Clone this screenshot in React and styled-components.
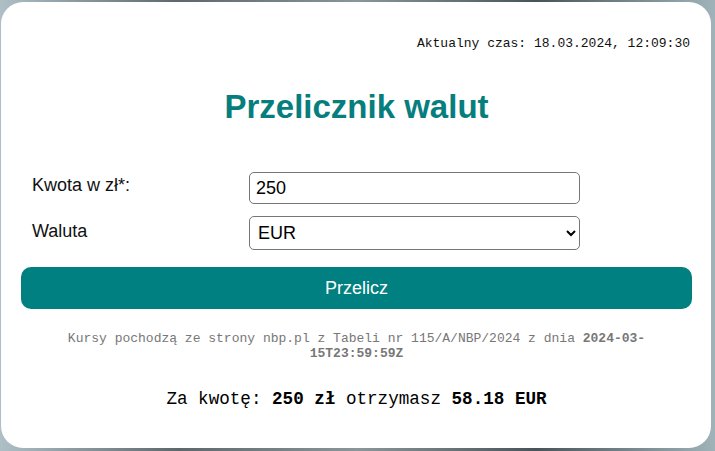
import React, { useState } from "react";
import styled, { createGlobalStyle } from "styled-components";

const GlobalStyle = createGlobalStyle`
    html, body {
        margin: 0;
        padding: 0;
        height: 451px;
        overflow: hidden;
    }
    body {
        background: linear-gradient(90deg, #aebfc6 0%, #5d676c 25%, #8a969a 50%, #49545a 75%, #9fb3b8 100%);
        font-family: "Liberation Sans", Arial, sans-serif;
    }
`

const Card = styled.div`
    box-sizing: border-box;
    margin: 2px 4px 0 1px;
    height: 446px;
    padding: 0 19px 0 20px;
    background: #fff;
    border-radius: 22px;
    display: flex;
    flex-direction: column;
`

const Clock = styled.div`
    margin-top: 34px;
    padding-right: 2px;
    text-align: right;
    font-family: "Liberation Mono", "Courier New", monospace;
    font-size: 13px;
    line-height: 15px;
    color: #111;
`

const Title = styled.h1`
    margin: 37px 0 0;
    text-align: center;
    font-size: 33px;
    line-height: 38px;
    font-weight: 700;
    color: #077e7e;
`

const Form = styled.form`
    margin-top: 46px;
    display: grid;
    grid-template-columns: 217px 331px;
    row-gap: 12px;
    padding-left: 11px;
    align-items: center;
`

const Label = styled.label`
    font-size: 18px;
    color: #111;
    padding-bottom: ${props => props.$lift || 0}px;
`

const Input = styled.input`
    box-sizing: border-box;
    height: 32px;
    width: 100%;
    padding: 0 6px;
    border: 1px solid #767676;
    border-radius: 5px;
    font-family: "Liberation Sans", Arial, sans-serif;
    font-size: 18px;
    color: #000;
    outline: none;
`

const Select = styled.select`
    box-sizing: border-box;
    height: 34px;
    width: 100%;
    padding: 0 4px;
    border: 1px solid #767676;
    border-radius: 5px;
    background: #fff;
    font-family: "Liberation Sans", Arial, sans-serif;
    font-size: 18px;
    color: #000;
`

const Button = styled.button`
    margin-top: 17px;
    height: 42px;
    width: 100%;
    border: none;
    border-radius: 10px;
    background: #008080;
    color: #fff;
    font-family: "Liberation Sans", Arial, sans-serif;
    font-size: 18px;
    cursor: pointer;
`

const Source = styled.p`
    margin: 22px 0 0;
    padding: 0 14px;
    text-align: center;
    font-family: "Liberation Mono", "Courier New", monospace;
    font-size: 13px;
    line-height: 15px;
    color: #777;
`

const Result = styled.p`
    margin: 28px 0 0;
    text-align: center;
    font-family: "Liberation Mono", "Courier New", monospace;
    font-size: 17.6px;
    line-height: 20px;
    color: #000;
`

const App = () => {
    const [amount, setAmount] = useState("250");
    const [currency, setCurrency] = useState("EUR");

    return (<>
        <GlobalStyle />
        <Card>
            <Clock>Aktualny czas: 18.03.2024, 12:09:30</Clock>
            <Title>Przelicznik walut</Title>
            <Form onSubmit={e => e.preventDefault()}>
                <Label htmlFor="amount" $lift={6}>Kwota w zł*:</Label>
                <Input id="amount" value={amount} onChange={e => setAmount(e.target.value)} />
                <Label htmlFor="currency" $lift={4}>Waluta</Label>
                <Select id="currency" value={currency} onChange={e => setCurrency(e.target.value)}>
                    <option value="EUR">EUR</option>
                    <option value="USD">USD</option>
                    <option value="CHF">CHF</option>
                    <option value="GBP">GBP</option>
                </Select>
            </Form>
            <Button type="button">Przelicz</Button>
            <Source>Kursy pochodzą ze strony nbp.pl z Tabeli nr 115/A/NBP/2024 z dnia <b>2024-03-15T23:59:59Z</b></Source>
            <Result>Za kwotę: <b>250 zł</b> otrzymasz <b>58.18 EUR</b></Result>
        </Card>
    </>)
}

export default App;
